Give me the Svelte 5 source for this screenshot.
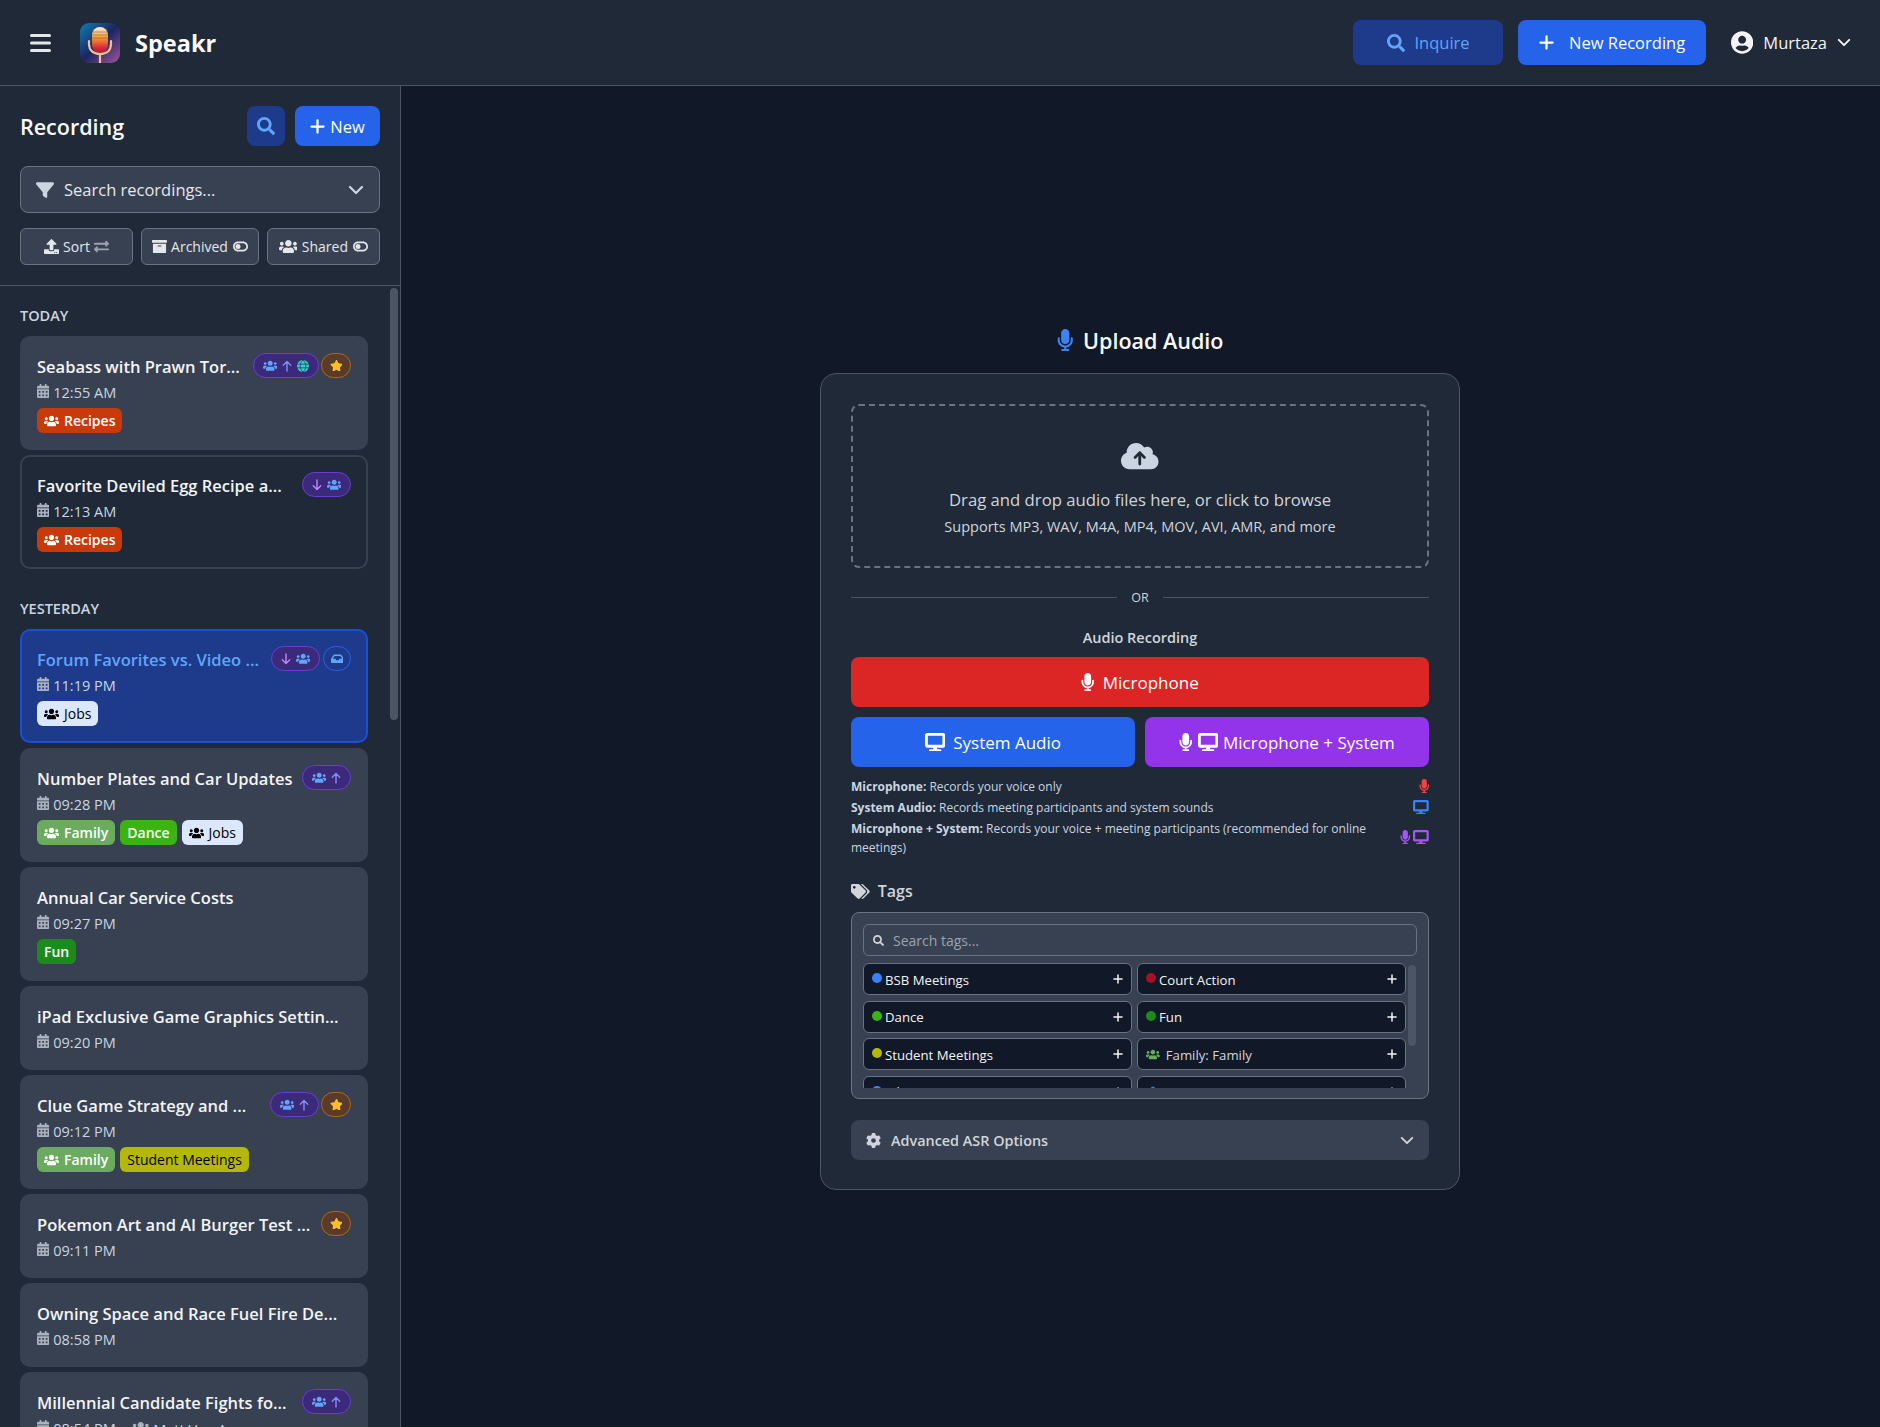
<script>
  const icons = {
    search: [512, 'M505 442.7L405.3 343c-4.5-4.5-10.6-7-17-7H372c27.6-35.3 44-79.7 44-128C416 93.1 322.9 0 208 0S0 93.1 0 208s93.1 208 208 208c48.3 0 92.7-16.4 128-44v16.3c0 6.4 2.5 12.5 7 17l99.7 99.7c9.4 9.4 24.6 9.4 33.9 0l28.3-28.3c9.4-9.4 9.4-24.6.1-34zM208 336c-70.7 0-128-57.2-128-128 0-70.7 57.2-128 128-128 70.7 0 128 57.2 128 128 0 70.7-57.2 128-128 128z'],
    filter: [512, 'M3.900 54.900C10.500 40.900 24.500 32 40 32H472c15.500 0 29.500 8.900 36.100 22.900s4.600 30.500-5.200 42.500L320 320.900V448c0 12.100-6.800 23.200-17.700 28.600s-23.800 4.300-33.500-3l-64-48c-8.100-6-12.800-15.500-12.800-25.600V320.900L9 97.300C-.7 85.400-2.800 68.800 3.900 54.900z'],
    users: [640, 'M96 224c35.3 0 64-28.7 64-64s-28.7-64-64-64-64 28.7-64 64 28.7 64 64 64zm448 0c35.3 0 64-28.7 64-64s-28.7-64-64-64-64 28.7-64 64 28.7 64 64 64zm32 32h-64c-17.6 0-33.5 7.1-45.1 18.6 40.3 22.1 68.9 62 75.1 109.4h66c17.7 0 32-14.3 32-32v-32c0-35.3-28.7-64-64-64zm-256 0c61.9 0 112-50.1 112-112S381.9 32 320 32 208 82.1 208 144s50.1 112 112 112zm76.8 32h-8.3c-20.8 10-43.9 16-68.5 16s-47.6-6-68.5-16h-8.3C179.6 288 128 339.6 128 403.2V432c0 26.5 21.5 48 48 48h288c26.5 0 48-21.5 48-48v-28.8c0-63.6-51.6-115.2-115.2-115.2zm-223.7-13.4C161.5 263.1 145.6 256 128 256H64c-35.3 0-64 28.7-64 64v32c0 17.7 14.3 32 32 32h65.9c6.3-47.4 34.9-87.3 75.2-109.4z'],
    calendar: [448, 'M0 464c0 26.5 21.5 48 48 48h352c26.5 0 48-21.5 48-48V192H0v272zm320-196c0-6.6 5.4-12 12-12h40c6.6 0 12 5.4 12 12v40c0 6.6-5.4 12-12 12h-40c-6.6 0-12-5.4-12-12v-40zm0 128c0-6.6 5.4-12 12-12h40c6.6 0 12 5.4 12 12v40c0 6.6-5.4 12-12 12h-40c-6.6 0-12-5.4-12-12v-40zM192 268c0-6.6 5.4-12 12-12h40c6.6 0 12 5.4 12 12v40c0 6.6-5.4 12-12 12h-40c-6.6 0-12-5.4-12-12v-40zm0 128c0-6.6 5.4-12 12-12h40c6.6 0 12 5.4 12 12v40c0 6.6-5.4 12-12 12h-40c-6.6 0-12-5.4-12-12v-40zM64 268c0-6.6 5.4-12 12-12h40c6.6 0 12 5.4 12 12v40c0 6.6-5.4 12-12 12H76c-6.6 0-12-5.4-12-12v-40zm0 128c0-6.6 5.4-12 12-12h40c6.6 0 12 5.4 12 12v40c0 6.6-5.4 12-12 12H76c-6.6 0-12-5.4-12-12v-40zM400 64h-48V16c0-8.8-7.2-16-16-16h-32c-8.8 0-16 7.2-16 16v48H160V16c0-8.8-7.2-16-16-16h-32c-8.8 0-16 7.2-16 16v48H48C21.5 64 0 85.5 0 112v48h448v-48c0-26.5-21.5-48-48-48z'],
    star: [576, 'M259.3 17.8L194 150.2 47.9 171.5c-26.2 3.8-36.7 36.1-17.7 54.6l105.7 103-25 145.5c-4.5 26.3 23.2 46 46.4 33.7L288 439.6l130.7 68.7c23.2 12.2 50.9-7.4 46.4-33.7l-25-145.5 105.7-103c19-18.5 8.5-50.8-17.7-54.6L382 150.2 316.7 17.8c-11.7-23.6-45.6-23.9-57.4 0z'],
    mic: [384, 'M192 0C139 0 96 43 96 96V256c0 53 43 96 96 96s96-43 96-96V96c0-53-43-96-96-96zM64 216c0-13.300-10.700-24-24-24s-24 10.700-24 24v40c0 89.100 66.200 162.700 152 174.400V464H120c-13.300 0-24 10.700-24 24s10.700 24 24 24h72 72c13.300 0 24-10.700 24-24s-10.700-24-24-24H216V430.400c85.800-11.700 152-85.300 152-174.400V216c0-13.300-10.700-24-24-24s-24 10.700-24 24v40c0 70.700-57.300 128-128 128s-128-57.300-128-128V216z'],
    desktop: [576, 'M64 0C28.700 0 0 28.700 0 64V352c0 35.300 28.700 64 64 64H240l-16 48H144c-17.700 0-32 14.300-32 32s14.300 32 32 32H432c17.700 0 32-14.300 32-32s-14.300-32-32-32H352l-16-48H512c35.300 0 64-28.700 64-64V64c0-35.300-28.700-64-64-64H64zM496 80V336H80V80H496z'],
    cloud: [640, 'M144 480C64.500 480 0 415.500 0 336c0-62.800 40.200-116.200 96.200-135.900c-.1-2.700-.2-5.400-.2-8.100c0-88.400 71.600-160 160-160c59.300 0 111 32.200 138.700 80.200C409.900 102 428.300 96 448 96c53 0 96 43 96 96c0 12.200-2.300 23.800-6.400 34.600C596 238.400 640 290.100 640 352c0 70.700-57.300 128-128 128H144zm79-217c-9.400 9.400-9.400 24.600 0 33.900s24.600 9.400 33.900 0l39-39V392c0 13.300 10.700 24 24 24s24-10.700 24-24V257.900l39 39c9.400 9.400 24.600 9.400 33.900 0s9.400-24.600 0-33.900l-80-80c-9.400-9.400-24.600-9.400-33.900 0l-80 80z'],
    tags: [640, 'M497.941 225.941L286.059 14.059A48 48 0 0 0 252.118 0H48C21.49 0 0 21.49 0 48v204.118a48 48 0 0 0 14.059 33.941l211.882 211.882c18.744 18.745 49.136 18.746 67.882 0l204.118-204.118c18.745-18.745 18.745-49.137 0-67.882zM112 160c-26.51 0-48-21.49-48-48s21.49-48 48-48 48 21.49 48 48-21.49 48-48 48zm513.941 133.823L421.823 497.941c-18.745 18.745-49.137 18.745-67.882 0l-.36-.36L527.64 323.522c16.999-16.999 26.36-39.6 26.36-63.64s-9.362-46.641-26.36-63.64L331.397 0h48.721a48 48 0 0 1 33.941 14.059l211.882 211.882c18.745 18.745 18.745 49.137 0 67.882z'],
    cog: [512, 'M495.900 166.600c3.200 8.700 .5 18.400-6.400 24.600l-43.300 39.400c1.100 8.300 1.700 16.800 1.700 25.400s-.6 17.100-1.700 25.400l43.300 39.400c6.900 6.200 9.600 15.900 6.400 24.600c-4.400 11.900-9.700 23.300-15.800 34.300l-4.700 8.100c-6.600 11-14 21.400-22.100 31.200c-5.900 7.200-15.700 9.600-24.500 6.800l-55.700-17.700c-13.400 10.300-28.200 18.900-44 25.400l-12.500 57.100c-2 9.100-9 16.300-18.200 17.800c-13.800 2.300-28 3.500-42.500 3.500s-28.700-1.200-42.500-3.500c-9.200-1.500-16.200-8.700-18.200-17.800l-12.500-57.100c-15.800-6.500-30.600-15.100-44-25.400L83.100 425.900c-8.800 2.800-18.600 .3-24.500-6.800c-8.100-9.800-15.500-20.200-22.100-31.200l-4.700-8.100c-6.100-11-11.400-22.400-15.800-34.300c-3.200-8.700-.5-18.400 6.400-24.600l43.300-39.400C64.600 273.100 64 264.600 64 256s.6-17.100 1.700-25.400L22.400 191.200c-6.900-6.200-9.600-15.900-6.400-24.600c4.400-11.900 9.700-23.300 15.800-34.300l4.700-8.100c6.600-11 14-21.400 22.100-31.200c5.900-7.200 15.700-9.600 24.500-6.800l55.700 17.700c13.400-10.300 28.200-18.900 44-25.400l12.500-57.100c2-9.100 9-16.300 18.200-17.800C227.300 1.200 241.500 0 256 0s28.700 1.200 42.500 3.500c9.200 1.500 16.200 8.700 18.200 17.800l12.500 57.100c15.800 6.500 30.600 15.100 44 25.400l55.700-17.700c8.800-2.800 18.600-.3 24.500 6.800c8.100 9.800 15.500 20.200 22.100 31.200l4.700 8.100c6.100 11 11.400 22.400 15.800 34.300zM256 336a80 80 0 1 0 0-160 80 80 0 1 0 0 160z'],
    user: [496, 'M248 8C111 8 0 119 0 256s111 248 248 248 248-111 248-248S385 8 248 8zm0 96c48.6 0 88 39.4 88 88s-39.4 88-88 88-88-39.4-88-88 39.4-88 88-88zm0 344c-58.7 0-111.3-26.6-146.5-68.2 18.8-35.4 55.6-59.8 98.5-59.8 2.4 0 4.8.4 7.1 1.1 13 4.2 26.6 6.9 40.9 6.9 14.3 0 28-2.7 40.9-6.9 2.3-.7 4.7-1.1 7.1-1.1 42.9 0 79.7 24.4 98.5 59.8C359.3 421.4 306.7 448 248 448z'],
    archive: [512, 'M32 448c0 17.7 14.3 32 32 32h384c17.7 0 32-14.3 32-32V160H32v288zm160-212c0-6.6 5.4-12 12-12h104c6.6 0 12 5.4 12 12v8c0 6.6-5.4 12-12 12H204c-6.6 0-12-5.4-12-12v-8zM480 32H32C14.3 32 0 46.3 0 64v48c0 8.8 7.2 16 16 16h480c8.8 0 16-7.2 16-16V64c0-17.7-14.3-32-32-32z'],
    toggle: [576, 'M384 128c70.700 0 128 57.300 128 128s-57.300 128-128 128H192c-70.700 0-128-57.300-128-128s57.300-128 128-128H384zM576 256c0-106-86-192-192-192H192C86 64 0 150 0 256S86 448 192 448H384c106 0 192-86 192-192zM192 352a96 96 0 1 0 0-192 96 96 0 1 0 0 192z'],
    upload: [512, 'M296 384h-80c-13.3 0-24-10.7-24-24V192h-87.7c-17.8 0-26.7-21.5-14.1-34.1L242.3 5.7c7.5-7.5 19.8-7.5 27.3 0l152.2 152.2c12.6 12.6 3.7 34.1-14.1 34.1H320v168c0 13.3-10.7 24-24 24zm216-8v112c0 13.3-10.7 24-24 24H24c-13.3 0-24-10.7-24-24V376c0-13.3 10.7-24 24-24h136v8c0 30.9 25.1 56 56 56h80c30.9 0 56-25.1 56-56v-8h136c13.3 0 24 10.7 24 24zm-124 88c0-11-9-20-20-20s-20 9-20 20 9 20 20 20 20-9 20-20zm64 0c0-11-9-20-20-20s-20 9-20 20 9 20 20 20 20-9 20-20z'],
    exchange: [512, 'M0 168v-16c0-13.255 10.745-24 24-24h360V80c0-21.367 25.899-32.042 40.971-16.971l80 80c9.372 9.373 9.372 24.569 0 33.941l-80 80C409.956 271.982 384 261.456 384 240v-48H24c-13.255 0-24-10.745-24-24zm488 152H128v-48c0-21.314-25.862-32.08-40.971-16.971l-80 80c-9.372 9.373-9.372 24.569 0 33.941l80 80C102.057 463.997 128 453.437 128 432v-48h360c13.255 0 24-10.745 24-24v-16c0-13.255-10.745-24-24-24z'],
    inbox: [576, 'M567.938 243.908L462.25 85.374A48.003 48.003 0 0 0 422.311 64H153.689a48 48 0 0 0-39.938 21.374L8.062 243.908A47.994 47.994 0 0 0 0 270.533V400c0 26.51 21.49 48 48 48h480c26.51 0 48-21.49 48-48V270.533a47.994 47.994 0 0 0-8.062-26.625zM162.252 128h251.497l85.333 128H376l-32 64H232l-32-64H76.918l85.334-128z']
  };

  const recipes = { name: 'Recipes', bg: '#c93a0a', fg: '#fff', group: true };
  const family = { name: 'Family', bg: '#6aab5e', fg: '#fff', group: true };
  const jobs = { name: 'Jobs', bg: '#dbe7fb', fg: '#000', group: true };
  const dance = { name: 'Dance', bg: '#3bb412', fg: '#fff' };
  const fun = { name: 'Fun', bg: '#1b8c1b', fg: '#fff' };
  const student = { name: 'Student Meetings', bg: '#b5b80c', fg: '#000' };

  const today = [
    { title: 'Seabass with Prawn Tor...', time: '12:55 AM', tags: [recipes], badge: ['users', 'up', 'globe'], star: true },
    { title: 'Favorite Deviled Egg Recipe a...', time: '12:13 AM', tags: [recipes], badge: ['down', 'users'], outline: true }
  ];
  const yesterday = [
    { title: 'Forum Favorites vs. Video ...', time: '11:19 PM', tags: [jobs], badge: ['down', 'users'], inbox: true, active: true },
    { title: 'Number Plates and Car Updates', time: '09:28 PM', tags: [family, dance, jobs], badge: ['users', 'up'] },
    { title: 'Annual Car Service Costs', time: '09:27 PM', tags: [fun] },
    { title: 'iPad Exclusive Game Graphics Settin...', time: '09:20 PM', tags: [] },
    { title: 'Clue Game Strategy and ...', time: '09:12 PM', tags: [family, student], badge: ['users', 'up'], star: true },
    { title: 'Pokemon Art and AI Burger Test ...', time: '09:11 PM', tags: [], star: true },
    { title: 'Owning Space and Race Fuel Fire De...', time: '08:58 PM', tags: [] },
    { title: 'Millennial Candidate Fights fo...', time: '08:54 PM', owner: 'Matt Van Arsen', tags: [], badge: ['users', 'up'] }
  ];
  const sections = [
    { label: 'TODAY', items: today },
    { label: 'YESTERDAY', items: yesterday }
  ];

  const pickerTags = [
    { name: 'BSB Meetings', color: '#3b82f6' },
    { name: 'Court Action', color: '#a3112a' },
    { name: 'Dance', color: '#3bb412' },
    { name: 'Fun', color: '#1b8c1b' },
    { name: 'Student Meetings', color: '#b5b80c' },
    { name: 'Family: Family', color: '#6aab5e', group: true },
    { name: 'Jobs', color: '#3b82f6' },
    { name: 'Recipes', color: '#3b82f6', group: true }
  ];
</script>

{#snippet icon(name, cls = '')}
  <svg class="ic {cls}" viewBox="0 0 {icons[name][0]} 512" fill="currentColor" aria-hidden="true"><path d={icons[name][1]} /></svg>
{/snippet}

{#snippet chevron(cls = '')}
  <svg class="chev {cls}" viewBox="0 0 16 10" fill="none" stroke="currentColor" stroke-width="2.2" stroke-linecap="round" stroke-linejoin="round" aria-hidden="true"><path d="M2 2l6 6 6-6" /></svg>
{/snippet}

{#snippet cross(cls = '')}
  <svg class="cross {cls}" viewBox="0 0 16 16" fill="none" stroke="currentColor" stroke-width="2.4" stroke-linecap="round" aria-hidden="true"><path d="M8 1.5v13M1.5 8h13" /></svg>
{/snippet}

{#snippet arrow(up)}
  <svg class="arrow {up ? 'up' : 'down'}" viewBox="0 0 12 14" fill="none" stroke="currentColor" stroke-width="1.7" stroke-linecap="round" stroke-linejoin="round" aria-hidden="true">
    {#if up}<path d="M6 13V1.5M1.5 6L6 1.5 10.5 6" />{:else}<path d="M6 1v11.5M1.5 8L6 12.5 10.5 8" />{/if}
  </svg>
{/snippet}

{#snippet globe()}
  <svg class="globe" viewBox="0 0 16 16" aria-hidden="true">
    <circle cx="8" cy="8" r="8" fill="#2dd4bf" />
    <path d="M0 5.6h16M0 10.4h16M8 0c-5 4-5 12 0 16M8 0c5 4 5 12 0 16" fill="none" stroke="#3b2a7a" stroke-width="1" />
  </svg>
{/snippet}

<div class="app">
  <header class="topbar">
    <div class="brand">
      <svg class="burger" viewBox="0 0 21 18" aria-hidden="true"><path d="M1.500 1.500h18M1.500 9h18M1.500 16.500h18" stroke="#e5e7eb" stroke-width="3" stroke-linecap="round" /></svg>
      <svg class="logo" viewBox="0 0 40 40" aria-hidden="true">
        <defs>
          <linearGradient id="logobg" x1="0" y1="0" x2="1" y2="1">
            <stop offset="0" stop-color="#0e7fb5" /><stop offset="0.5" stop-color="#1c2560" /><stop offset="1" stop-color="#a2559f" />
          </linearGradient>
          <linearGradient id="logomic" x1="0" y1="0" x2="0" y2="1">
            <stop offset="0" stop-color="#f8f0e0" /><stop offset="0.4" stop-color="#f5a02c" /><stop offset="0.8" stop-color="#d8283a" /><stop offset="1" stop-color="#a8203f" />
          </linearGradient>
        </defs>
        <rect width="40" height="40" rx="9" fill="url(#logobg)" />
        <rect x="12" y="4" width="16" height="26" rx="8" fill="url(#logomic)" />
        <path d="M12 9h16M12 12h16M12 15h16" stroke="#5a3038" stroke-width="0.7" opacity="0.55" />
        <path d="M9 18v3c0 6.500 4.500 10 11 10s11-3.500 11-10v-3M20 31v9" fill="none" stroke="#edc28c" stroke-width="2.200" stroke-linecap="round" />
      </svg>
      <span class="wordmark">Speakr</span>
    </div>
    <div class="top-actions">
      <button class="btn-inquire">{@render icon('search')}<span>Inquire</span></button>
      <button class="btn-record">{@render cross()}<span>New Recording</span></button>
      <div class="account">{@render icon('user')}<span>Murtaza</span>{@render chevron()}</div>
    </div>
  </header>

  <div class="body">
    <aside class="sidebar">
      <div class="side-head">
        <div class="side-title">
          <h2>Recording</h2>
          <div class="side-btns">
            <button class="square">{@render icon('search')}</button>
            <button class="new">{@render cross()}<span>New</span></button>
          </div>
        </div>
        <div class="filter">
          {@render icon('filter')}
          <span>Search recordings...</span>
          {@render chevron()}
        </div>
        <div class="toggles">
          <button class="tg sort">{@render icon('upload')}<span>Sort</span>{@render icon('exchange', 'dim')}</button>
          <button class="tg arch">{@render icon('archive')}<span>Archived</span>{@render icon('toggle', 'sw')}</button>
          <button class="tg shar">{@render icon('users')}<span>Shared</span>{@render icon('toggle', 'sw')}</button>
        </div>
      </div>

      <div class="list">
        {#each sections as section}
          <section>
            <h3>{section.label}</h3>
            {#each section.items as rec}
              <article class="rec" class:outline={rec.outline} class:active={rec.active}>
                <div class="rec-top">
                  <span class="rec-title">{rec.title}</span>
                  <div class="badges">
                    {#if rec.badge}
                      <span class="badge share">
                        {#each rec.badge as b}
                          {#if b === 'users'}{@render icon('users')}
                          {:else if b === 'up'}{@render arrow(true)}
                          {:else if b === 'down'}{@render arrow(false)}
                          {:else}{@render globe()}{/if}
                        {/each}
                      </span>
                    {/if}
                    {#if rec.inbox}<span class="badge inbox">{@render icon('inbox')}</span>{/if}
                    {#if rec.star}<span class="badge star">{@render icon('star')}</span>{/if}
                  </div>
                </div>
                <div class="rec-meta">
                  {@render icon('calendar')}<span>{rec.time}</span>
                  {#if rec.owner}<span class="owner">{@render icon('users')}<span>{rec.owner}</span></span>{/if}
                </div>
                {#if rec.tags.length}
                  <div class="rec-tags">
                    {#each rec.tags as t}
                      <span class="tag" class:dark={t.fg === '#000'} style="background:{t.bg};color:{t.fg}">{#if t.group}{@render icon('users')}{/if}{t.name}</span>
                    {/each}
                  </div>
                {/if}
              </article>
            {/each}
          </section>
        {/each}
      </div>
      <div class="thumb"></div>
    </aside>

    <main class="main">
      <h1>{@render icon('mic')}<span>Upload Audio</span></h1>
      <div class="panel">
        <div class="drop">
          {@render icon('cloud')}
          <p class="drop-a">Drag and drop audio files here, or click to browse</p>
          <p class="drop-b">Supports MP3, WAV, M4A, MP4, MOV, AVI, AMR, and more</p>
        </div>
        <div class="or"><span>OR</span></div>
        <p class="rec-label">Audio Recording</p>
        <button class="big red">{@render icon('mic')}<span>Microphone</span></button>
        <div class="big-row">
          <button class="big blue">{@render icon('desktop')}<span>System Audio</span></button>
          <button class="big purple">{@render icon('mic')}{@render icon('desktop')}<span>Microphone + System</span></button>
        </div>
        <div class="desc">
          <div class="desc-row"><p><b>Microphone:</b> Records your voice only</p><span class="di red-i">{@render icon('mic')}</span></div>
          <div class="desc-row"><p><b>System Audio:</b> Records meeting participants and system sounds</p><span class="di blue-i">{@render icon('desktop')}</span></div>
          <div class="desc-row"><p><b>Microphone + System:</b> Records your voice + meeting participants (recommended for online meetings)</p><span class="di purple-i">{@render icon('mic')}{@render icon('desktop')}</span></div>
        </div>

        <div class="tags-head">{@render icon('tags')}<span>Tags</span></div>
        <div class="tag-box">
          <div class="tag-search">{@render icon('search')}<span>Search tags...</span></div>
          <div class="tag-scroll">
            <div class="tag-grid">
              {#each pickerTags as t}
                <div class="pick">
                  {#if t.group}<span class="pick-g" style="color:{t.color}">{@render icon('users')}</span>{:else}<span class="dot" style="background:{t.color}"></span>{/if}
                  <span class="pick-name" class:muted={t.group}>{t.name}</span>
                  {@render cross()}
                </div>
              {/each}
            </div>
            <div class="tag-thumb"></div>
          </div>
        </div>

        <div class="advanced">
          {@render icon('cog')}
          <span>Advanced ASR Options</span>
          {@render chevron()}
        </div>
      </div>
    </main>
  </div>
</div>

<style>
  :global(body) {
    background: #111827;
    font-family: "Open Sans", "Noto Sans", sans-serif;
    color: #fff;
    overflow: hidden;
  }
  * {
    box-sizing: border-box;
  }
  h1, h2, h3, p {
    margin: 0;
  }
  button {
    font: inherit;
    border: none;
    color: inherit;
    padding: 0;
  }
  .ic {
    display: block;
    height: 1em;
    width: auto;
    flex: none;
  }
  .app {
    height: 1427px;
    display: flex;
    flex-direction: column;
    overflow: hidden;
  }

  /* top bar */
  .topbar {
    height: 86px;
    flex: none;
    background: #1f2937;
    border-bottom: 1px solid #4b5563;
    display: flex;
    align-items: center;
    justify-content: space-between;
    padding: 0 29px 0 30px;
  }
  .brand {
    display: flex;
    align-items: center;
  }
  .burger {
    width: 21px;
    height: 18px;
    margin-right: 29px;
  }
  .logo {
    width: 40px;
    height: 40px;
    margin-right: 15px;
  }
  .wordmark {
    font-size: 23.500px;
    font-weight: 700;
    color: #f9fafb;
    margin-top: 1px;
  }
  .top-actions {
    display: flex;
    align-items: center;
  }
  .btn-inquire, .btn-record {
    height: 45px;
    border-radius: 8px;
    display: flex;
    align-items: center;
    justify-content: center;
    font-size: 16.500px;
  }
  .btn-inquire {
    width: 150px;
    background: #1e3a8a;
    color: #60a5fa;
    gap: 10px;
    margin-right: 15px;
  }
  .btn-inquire .ic {
    font-size: 18px;
  }
  .btn-record {
    width: 188px;
    background: #2563eb;
    color: #fff;
    gap: 15px;
    margin-right: 25px;
  }
  .cross {
    width: 15px;
    height: 15px;
    flex: none;
  }
  .account {
    display: flex;
    align-items: center;
    font-size: 16.500px;
    color: #f3f4f6;
  }
  .account .ic {
    font-size: 23px;
    margin-right: 10px;
  }
  .chev {
    width: 14px;
    height: 9px;
    flex: none;
  }
  .account .chev {
    margin-left: 10px;
  }

  /* sidebar */
  .body {
    flex: 1;
    display: flex;
    min-height: 0;
  }
  .sidebar {
    width: 401px;
    flex: none;
    background: #1f2937;
    border-right: 1px solid #4b5563;
    position: relative;
    display: flex;
    flex-direction: column;
    min-height: 0;
  }
  .side-head {
    padding: 20px 20px 20px;
    border-bottom: 1px solid #4b5563;
  }
  .side-title {
    display: flex;
    align-items: center;
    justify-content: space-between;
    height: 40px;
  }
  h2 {
    font-size: 21.500px;
    font-weight: 600;
    color: #f9fafb;
  }
  .side-btns {
    display: flex;
    gap: 10px;
  }
  .square {
    width: 38px;
    height: 40px;
    border-radius: 8px;
    background: #1e3a8a;
    color: #60a5fa;
    display: flex;
    align-items: center;
    justify-content: center;
    font-size: 18px;
  }
  .new {
    width: 85px;
    height: 40px;
    border-radius: 8px;
    background: #2563eb;
    display: flex;
    align-items: center;
    justify-content: center;
    gap: 5px;
    font-size: 16.500px;
  }
  .filter {
    margin-top: 20px;
    height: 47px;
    background: #374151;
    border: 1px solid #6b7280;
    border-radius: 8px;
    display: flex;
    align-items: center;
    padding: 0 15px;
    font-size: 16.500px;
    color: #e5e7eb;
  }
  .filter .ic {
    font-size: 18px;
    color: #cbd5e1;
    margin-right: 10px;
  }
  .filter .chev {
    margin-left: auto;
    color: #cbd5e1;
    width: 16px;
    height: 10px;
  }
  .toggles {
    margin-top: 15px;
    display: flex;
    gap: 8px;
  }
  .tg {
    height: 37px;
    background: #374151;
    border: 1px solid #6b7280;
    border-radius: 6px;
    display: flex;
    align-items: center;
    justify-content: center;
    gap: 4.500px;
    font-size: 14px;
    color: #e5e7eb;
  }
  .tg .ic {
    font-size: 15px;
  }
  .tg .dim {
    color: #9ca3af;
  }
  .tg .sw {
    font-size: 15px;
    width: 15px;
    height: 15px;
    margin-left: 1px;
  }
  .sort {
    width: 113px;
  }
  .arch {
    width: 118px;
  }
  .shar {
    width: 113px;
  }
  .list {
    flex: 1;
    min-height: 0;
    overflow: hidden;
    padding: 20px 32px 0 20px;
  }
  .list section + section {
    margin-top: 30px;
  }
  h3 {
    font-size: 14.500px;
    font-weight: 600;
    line-height: 20px;
    color: #cbd5e1;
    margin-bottom: 10px;
  }
  .rec {
    background: #374151;
    border: 2px solid transparent;
    border-radius: 10px;
    padding: 15px;
    margin-bottom: 5px;
  }
  .rec.outline {
    background: transparent;
    border-color: #374151;
  }
  .rec.active {
    background: #1e3a8a;
    border-color: #1d4ed8;
  }
  .rec-top {
    display: flex;
    align-items: center;
    justify-content: space-between;
    height: 25px;
    gap: 6px;
  }
  .rec-title {
    font-size: 16.500px;
    font-weight: 600;
    color: #f3f4f6;
    white-space: nowrap;
    padding-top: 2px;
  }
  .active .rec-title {
    color: #60a5fa;
  }
  .badges {
    display: flex;
    gap: 2px;
    flex: none;
  }
  .badge {
    height: 25px;
    border-radius: 13px;
    display: flex;
    align-items: center;
    justify-content: center;
    gap: 5px;
    border: 1px solid;
    padding: 0 9px;
    font-size: 11.500px;
  }
  .share {
    background: #3b2a7a;
    border-color: #6d3bd8;
    color: #60a5fa;
  }
  .arrow {
    width: 10px;
    height: 12px;
    flex: none;
  }
  .arrow.up {
    color: #818cf8;
  }
  .arrow.down {
    color: #c084fc;
  }
  .globe {
    width: 12px;
    height: 12px;
    flex: none;
  }
  .star {
    width: 30px;
    padding: 0;
    background: #5a3a2a;
    border-color: #b4690e;
    color: #fbbf24;
  }
  .inbox {
    width: 28px;
    padding: 0;
    margin-left: 1px;
    background: transparent;
    border-color: #2563eb;
    color: #60a5fa;
  }
  .rec-meta {
    display: flex;
    align-items: center;
    height: 22px;
    margin-top: 3px;
    font-size: 14.500px;
    color: #cbd5e1;
    gap: 4px;
  }
  .rec-meta span {
    padding-top: 1px;
  }
  .rec-meta .ic {
    font-size: 14px;
    color: #aab2c0;
    margin-top: -2px;
  }
  .owner {
    display: flex;
    align-items: center;
    gap: 4px;
    margin-left: 12px;
  }
  .rec-tags {
    display: flex;
    gap: 5px;
    margin-top: 5px;
  }
  .tag {
    height: 25px;
    border-radius: 6px;
    display: flex;
    align-items: center;
    gap: 5px;
    padding: 0 7px;
    font-size: 14px;
    font-weight: 600;
  }
  .tag.dark {
    font-weight: 500;
  }
  .tag .ic {
    font-size: 12px;
  }
  .thumb {
    position: absolute;
    right: 2px;
    top: 202px;
    width: 8px;
    height: 432px;
    border-radius: 4px;
    background: #4b5563;
  }

  /* main */
  .main {
    flex: 1;
    min-width: 0;
    display: flex;
    flex-direction: column;
    align-items: center;
    padding-top: 239px;
    padding-right: 1px;
  }
  h1 {
    display: flex;
    align-items: center;
    gap: 10px;
    height: 30px;
    margin-bottom: 18px;
    font-size: 21.500px;
    font-weight: 600;
    color: #f9fafb;
  }
  h1 .ic {
    font-size: 22px;
    color: #3b82f6;
  }
  .panel {
    width: 640px;
    height: 817px;
    background: #1f2937;
    border: 1px solid #4b5563;
    border-radius: 16px;
    padding: 30px;
  }
  .drop {
    height: 164px;
    border: 2px dashed #6b7280;
    border-radius: 8px;
    display: flex;
    flex-direction: column;
    align-items: center;
    padding-top: 35px;
  }
  .drop .ic {
    font-size: 30px;
    color: #cbd5e1;
  }
  .drop-a {
    margin-top: 16px;
    font-size: 16.700px;
    line-height: 26px;
    color: #d1d5db;
  }
  .drop-b {
    margin-top: 1px;
    font-size: 14.500px;
    line-height: 26px;
    color: #d1d5db;
  }
  .or {
    margin-top: 19px;
    height: 20px;
    display: flex;
    align-items: center;
    gap: 14px;
    font-size: 12.500px;
    color: #d1d5db;
  }
  .or::before, .or::after {
    content: '';
    flex: 1;
    border-top: 1px solid #4b5563;
  }
  .rec-label {
    margin-top: 21px;
    text-align: center;
    font-size: 14.500px;
    font-weight: 600;
    line-height: 20px;
    color: #d1d5db;
  }
  .big {
    height: 50px;
    width: 100%;
    border-radius: 8px;
    display: flex;
    align-items: center;
    justify-content: center;
    gap: 8px;
    font-size: 17px;
    color: #fff;
  }
  .big .ic {
    font-size: 18px;
  }
  .red {
    margin-top: 9px;
    background: #dc2626;
  }
  .big-row {
    margin-top: 10px;
    display: flex;
    gap: 10px;
  }
  .blue {
    background: #2563eb;
  }
  .purple {
    background: #9333ea;
    gap: 5px;
  }
  .desc {
    margin-top: 10px;
    font-size: 12px;
    line-height: 19px;
    color: #cbd5e1;
  }
  .desc-row {
    display: flex;
    align-items: center;
    justify-content: space-between;
    gap: 30px;
    margin-bottom: 2px;
  }
  .desc b {
    font-weight: 700;
  }
  .di {
    display: flex;
    gap: 3px;
    font-size: 14px;
    flex: none;
    margin-top: -2px;
  }
  .red-i {
    color: #ef4444;
  }
  .blue-i {
    color: #3b82f6;
  }
  .purple-i {
    color: #a855f7;
  }
  .tags-head {
    margin-top: 22px;
    display: flex;
    align-items: center;
    gap: 8px;
    font-size: 16px;
    font-weight: 600;
    color: #d1d5db;
    height: 24px;
  }
  .tags-head .ic {
    font-size: 15px;
  }
  .tag-box {
    margin-top: 9px;
    height: 187px;
    background: #374151;
    border: 1px solid #6b7280;
    border-radius: 8px;
    padding: 11px;
  }
  .tag-search {
    height: 32px;
    border: 1px solid #6b7280;
    border-radius: 6px;
    display: flex;
    align-items: center;
    padding: 0 9px;
    gap: 9px;
    font-size: 14px;
    color: #9ca3af;
  }
  .tag-search .ic {
    font-size: 11px;
    color: #d1d5db;
  }
  .tag-scroll {
    margin-top: 7px;
    height: 125px;
    overflow: hidden;
    position: relative;
  }
  .tag-grid {
    width: 543px;
    display: grid;
    grid-template-columns: 1fr 1fr;
    gap: 5.600px 5px;
  }
  .pick {
    height: 32px;
    background: #111827;
    border: 1px solid #6b7280;
    border-radius: 6px;
    display: flex;
    align-items: center;
    padding: 0 8px;
    gap: 3px;
    font-size: 13.200px;
    color: #f3f4f6;
  }
  .dot {
    width: 10px;
    height: 10px;
    border-radius: 50%;
    flex: none;
    margin-top: -2px;
  }
  .pick-g {
    font-size: 11px;
    margin-right: 3px;
  }
  .pick-name {
    padding-top: 1px;
  }
  .pick-name.muted {
    color: #d1d5db;
  }
  .pick .cross {
    margin-left: auto;
    width: 10px;
    height: 10px;
  }
  .tag-thumb {
    position: absolute;
    top: 2px;
    left: 545px;
    width: 8px;
    height: 81px;
    border-radius: 4px;
    background: #4b5563;
  }
  .advanced {
    margin-top: 21px;
    height: 40px;
    background: #374151;
    border-radius: 8px;
    display: flex;
    align-items: center;
    padding: 0 15px;
    gap: 10px;
    font-size: 14.400px;
    font-weight: 600;
    color: #d1d5db;
  }
  .advanced .ic {
    font-size: 15px;
  }
  .advanced .chev {
    margin-left: auto;
  }
</style>
